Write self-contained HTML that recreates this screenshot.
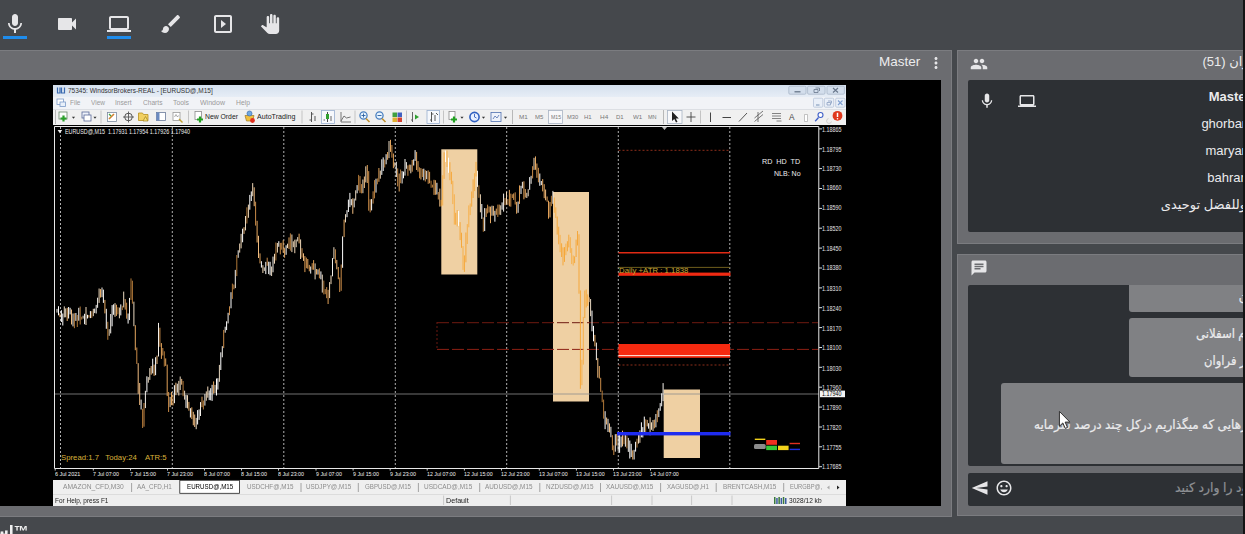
<!DOCTYPE html>
<html lang="fa"><head><meta charset="utf-8"><title>Online class</title>
<style>
html,body{margin:0;padding:0}
body{width:1245px;height:534px;overflow:hidden;position:relative;background:#45484c;font-family:"Liberation Sans","DejaVu Sans",sans-serif}
.abs{position:absolute}
.i{position:absolute;display:block}
.t{position:absolute;white-space:nowrap;font-family:"Liberation Sans",sans-serif}
.chart{position:absolute;left:53px;top:85px;display:block}
#topbar{left:0;top:0;width:1245px;height:50px;background:#45484c}
.ul{position:absolute;top:36px;height:3px;width:24px;background:#1f8ceb}
.panel{position:absolute;background:#6b6c70;box-sizing:border-box;border:1px solid #7b7c80}
.dark{position:absolute;background:#2d3034;border-radius:2px}
.ut{position:absolute;white-space:nowrap;color:#ebebed;font-size:13px;line-height:16px}
.fa{font-family:"Liberation Sans","DejaVu Sans",sans-serif}
.sx{-webkit-text-stroke:0.2px}
.sx{transform-origin:0 50%}
.bub{position:absolute;background:#808184;border-radius:3px}
#mt4{position:absolute;left:0;top:0;width:1245px;height:534px;filter:blur(0.35px)}
</style></head><body>
<div id="topbar" class="abs"></div>
<svg class="i" style="left:3px;top:12px;" width="24" height="24" viewBox="0 0 24 24"><path d="M12 14c1.66 0 2.99-1.34 2.99-3L15 5c0-1.66-1.34-3-3-3S9 3.340 9 5v6c0 1.660 1.340 3 3 3zm5.300-3c0 3-2.540 5.100-5.300 5.100S6.700 14 6.700 11H5c0 3.410 2.720 6.230 6 6.720V21h2v-3.280c3.280-.48 6-3.300 6-6.720h-1.700z" fill="#e6e6e8"/></svg><svg class="i" style="left:55px;top:12px;" width="24" height="24" viewBox="0 0 24 24"><path d="M17 10.500V7c0-.55-.45-1-1-1H4c-.55 0-1 .45-1 1v10c0 .55.45 1 1 1h12c.55 0 1-.45 1-1v-3.500l4 4v-11l-4 4z" fill="#e6e6e8"/></svg><svg class="i" style="left:107px;top:12px;" width="24" height="24" viewBox="0 0 24 24"><path d="M20 18c1.100 0 2-.9 2-2V6c0-1.100-.9-2-2-2H4c-1.100 0-2 .9-2 2v10c0 1.100.9 2 2 2H0v2h24v-2h-4zM4 6h16v10H4V6z" fill="#e6e6e8"/></svg><svg class="i" style="left:159px;top:12px;" width="24" height="24" viewBox="0 0 24 24"><path d="M7 14c-1.660 0-3 1.340-3 3 0 1.310-1.160 2-2 2 .92 1.220 2.490 2 4 2 2.210 0 4-1.790 4-4 0-1.660-1.340-3-3-3zm13.710-9.370l-1.340-1.340c-.39-.39-1.020-.39-1.410 0L9 12.250 11.750 15l8.960-8.960c.39-.39.39-1.020 0-1.410z" fill="#e6e6e8"/></svg><svg class="i" style="left:211px;top:12px;" width="24" height="24" viewBox="0 0 24 24"><path d="M10 8v8l5-4-5-4zm9-5H5c-1.100 0-2 .9-2 2v14c0 1.100.9 2 2 2h14c1.100 0 2-.9 2-2V5c0-1.100-.9-2-2-2zm0 16H5V5h14v14z" fill="#e6e6e8"/></svg><svg class="i" style="left:260px;top:14px;" width="20" height="20" viewBox="0 0 24 24"><path d="M23 5.500V20c0 2.200-1.800 4-4 4h-7.300c-1.080 0-2.100-.43-2.850-1.190L1 14.830s1.260-1.230 1.300-1.250c.22-.19.49-.29.79-.29.22 0 .42.060.6.160.040.010 4.310 2.460 4.310 2.460V4c0-.83.67-1.500 1.500-1.500S11 3.170 11 4v7h1V1.500c0-.83.67-1.500 1.500-1.500S15 .67 15 1.500V11h1V2.500c0-.83.67-1.500 1.500-1.500s1.500.67 1.500 1.500V11h1V5.500c0-.83.67-1.500 1.500-1.500s1.500.67 1.500 1.500z" fill="#e6e6e8"/></svg>
<div class="ul" style="left:3px"></div><div class="ul" style="left:107px"></div>

<!-- left share panel -->
<div class="panel" style="left:-1px;top:50px;width:953px;height:467px"></div>
<span class="ut" style="left:879px;top:53.500px;font-size:13.500px">Master</span>
<svg class="i" style="left:927px;top:54px;" width="18" height="18" viewBox="0 0 24 24"><path d="M12 8c1.100 0 2-.9 2-2s-.9-2-2-2-2 .9-2 2 .9 2 2 2zm0 2c-1.100 0-2 .9-2 2s.9 2 2 2 2-.9 2-2-.9-2-2-2zm0 6c-1.100 0-2 .9-2 2s.9 2 2 2 2-.9 2-2-.9-2-2-2z" fill="#e6e6e8"/></svg>
<div class="abs" style="left:0;top:80px;width:941px;height:426px;background:#000"></div>

<div id="mt4">
<div class="abs" style="left:53px;top:85px;width:792.500px;height:12px;background:linear-gradient(#d4e0ee,#e6edf6)"></div>
<div class="abs" style="left:53px;top:97px;width:792.500px;height:11.500px;background:#f1f3f7"></div>
<div class="abs" style="left:53px;top:108.500px;width:792.500px;height:16.500px;background:#f0f0f0;border-top:1px solid #dcdfe4;box-sizing:border-box"></div>
<div class="abs" style="left:53px;top:479.800px;width:792.500px;height:14.200px;background:#efefef"></div>
<div class="abs" style="left:53px;top:494px;width:792.500px;height:12.300px;background:#eeeeee;border-top:1px solid #dcdcdc;box-sizing:border-box"></div>
<svg class="chart" width="793" height="421" viewBox="53 85 793 421">
<rect x="53" y="125" width="793" height="355" fill="#000"/>
<line x1="60.5" y1="127" x2="60.5" y2="468" stroke="#c4c4c4" stroke-width="0.9" stroke-dasharray="2 2"/>
<line x1="172.3" y1="127" x2="172.3" y2="468" stroke="#c4c4c4" stroke-width="0.9" stroke-dasharray="2 2"/>
<line x1="283.8" y1="127" x2="283.8" y2="468" stroke="#c4c4c4" stroke-width="0.9" stroke-dasharray="2 2"/>
<line x1="395.3" y1="127" x2="395.3" y2="468" stroke="#c4c4c4" stroke-width="0.9" stroke-dasharray="2 2"/>
<line x1="506.7" y1="127" x2="506.7" y2="468" stroke="#c4c4c4" stroke-width="0.9" stroke-dasharray="2 2"/>
<line x1="618.3" y1="127" x2="618.3" y2="468" stroke="#c4c4c4" stroke-width="0.9" stroke-dasharray="2 2"/>
<line x1="729.8" y1="127" x2="729.8" y2="468" stroke="#c4c4c4" stroke-width="0.9" stroke-dasharray="2 2"/>
<rect x="441.3" y="149.3" width="36" height="125.2" fill="#efd0a3"/>
<rect x="553" y="192" width="36" height="209.5" fill="#efd0a3"/>
<rect x="663.7" y="389.5" width="36.3" height="68.5" fill="#efd0a3"/>
<line x1="437" y1="322.7" x2="818" y2="322.7" stroke="#6e1a10" stroke-width="1" stroke-dasharray="12 3"/>
<line x1="437" y1="349.4" x2="818" y2="349.4" stroke="#8c2014" stroke-width="1" stroke-dasharray="12 3"/>
<line x1="437" y1="322" x2="437" y2="350" stroke="#6a1810" stroke-width="1" stroke-dasharray="2 2"/>
<line x1="54" y1="394" x2="819" y2="394" stroke="#8e8e8e" stroke-width="0.8"/>
<line x1="618.5" y1="150.3" x2="730" y2="150.3" stroke="#b03a22" stroke-width="0.8" stroke-dasharray="2 2"/>
<line x1="618.5" y1="252.7" x2="730" y2="252.7" stroke="#e02a14" stroke-width="1.4"/>
<rect x="618.5" y="272.6" width="112" height="3.2" fill="#f02a12"/>
<line x1="618.5" y1="267.4" x2="730" y2="267.4" stroke="#7a6820" stroke-width="0.9"/>
<rect x="618.5" y="344" width="111.5" height="13.8" fill="#f52a10"/>
<line x1="618.5" y1="355.6" x2="730" y2="355.6" stroke="#ffe8e0" stroke-width="1"/>
<line x1="618.5" y1="365" x2="730" y2="365" stroke="#b03a22" stroke-width="0.8" stroke-dasharray="2 2"/>
<path d="M57.0 308.9V312.6M73.0 313.5V326.4M96.2 304.9V313.5M97.6 297.7V307.8M102.0 287.5V297.2M110.7 314.0V333.4M129.5 297.9V320.1M145.4 390.8V408.1M158.5 322.9V356.5M177.3 383.7V392.7M199.1 409.4V419.9M200.5 402.1V416.0M204.9 394.1V405.6M222.3 346.2V357.3M225.2 326.7V332.7M228.1 312.8V323.4M235.3 269.9V288.1M238.2 250.3V257.8M273.0 256.6V272.3M310.7 266.5V273.6M332.5 258.1V276.3M354.2 198.6V207.4M396.3 161.8V177.0M402.1 171.1V183.5M405.0 159.0V175.6M406.4 162.1V168.8M426.7 170.9V179.2M477.5 170.8V186.9M503.6 193.6V211.6M522.4 181.8V188.3M531.1 175.8V183.8M552.9 190.9V203.8M596.4 342.6V360.1M608.0 418.8V432.0M610.9 426.8V437.2M615.3 434.2V451.7M618.2 435.5V450.9M625.4 433.2V446.7M628.3 437.9V451.9M655.9 414.0V427.3M658.8 408.3V417.1M663.1 383.1V401.1" stroke="#f4f0ea" stroke-width="1" fill="none"/>
<path d="M58.5 306.2V315.3M61.4 310.2V322.0M62.8 313.5V325.5M68.6 307.0V318.5M70.1 307.8V314.4M75.9 313.0V320.9M78.8 307.8V320.7M84.6 313.8V324.2M87.5 314.8V318.5M90.4 311.1V318.1M94.7 308.6V313.1M103.4 289.6V302.9M106.3 308.8V328.8M112.1 305.1V326.3M113.6 304.3V314.8M120.8 304.4V315.4M128.1 313.5V323.6M141.1 399.6V409.5M146.9 376.3V392.3M152.7 358.7V373.4M155.6 357.2V375.2M174.4 385.2V403.2M186.0 394.9V407.9M190.4 408.2V417.5M197.6 410.1V424.5M209.2 390.5V400.1M210.7 388.2V400.3M212.1 384.8V400.9M216.5 378.5V395.5M217.9 378.2V389.6M220.8 352.3V370.0M226.6 321.3V330.1M231.0 292.2V308.3M242.6 228.7V242.3M249.8 194.9V209.7M251.3 191.4V201.0M261.4 261.2V267.6M265.8 261.9V274.1M268.7 261.7V274.1M270.1 261.8V275.3M278.8 241.2V246.8M286.1 245.3V254.8M318.0 269.4V274.6M320.9 271.4V279.3M342.6 236.4V267.8M347.0 210.2V217.2M348.4 199.6V212.0M349.9 192.9V207.1M351.3 199.1V205.3M357.1 185.1V193.3M371.6 199.1V210.4M376.0 178.7V192.6M381.8 159.3V174.9M383.2 157.4V171.0M386.1 154.2V164.3M403.5 171.6V178.3M413.7 159.3V165.5M415.1 150.1V160.9M423.8 168.7V180.3M436.9 182.8V194.5M445.6 150.5V162.0M448.5 157.7V172.8M458.6 211.0V225.9M481.8 204.0V218.9M484.7 208.1V231.1M494.9 210.8V221.7M502.1 202.4V209.7M518.1 201.5V212.8M521.0 185.8V194.0M529.7 177.1V189.8M539.8 173.5V185.8M541.3 181.0V185.1M592.0 310.6V331.3M593.5 325.9V341.3M605.1 411.2V429.2M619.6 434.8V452.8M621.1 436.5V447.4M629.8 440.5V458.5M631.2 443.8V457.0M634.1 449.8V459.5M635.6 441.8V451.6M641.4 422.3V437.3M642.8 427.1V437.5M644.3 416.6V432.9M648.6 423.2V428.7M660.2 403.1V410.8M661.7 393.3V406.3" stroke="#ffffff" stroke-width="1" fill="none"/>
<path d="M59.9 313.3V317.1M88.9 315.1V317.6M116.5 304.7V315.9M125.2 299.1V309.6M165.7 358.4V365.9M167.2 364.6V396.1M173.0 395.1V405.5M191.8 407.3V419.1M202.0 396.7V407.2M260.0 253.4V263.4M284.6 248.1V257.7M289.0 237.4V249.0M304.9 256.1V272.1M309.3 264.9V271.3M313.6 260.1V269.8M328.1 289.8V304.0M338.3 267.0V279.2M367.3 165.0V183.0M378.9 168.0V181.8M393.4 153.5V168.2M399.2 173.5V191.5M412.2 160.0V171.7M429.6 171.8V183.3M434.0 179.8V194.9M486.2 208.3V217.0M496.3 208.6V214.8M509.4 189.9V206.3M513.7 193.4V199.9M519.5 185.4V203.9M536.9 163.5V177.8M547.1 196.5V201.7M548.5 200.7V218.7M616.7 434.0V445.5M632.7 450.4V459.5M654.4 419.6V428.3" stroke="#e0a058" stroke-width="1" fill="none"/>
<path d="M64.3 306.4V317.4M65.7 308.4V317.3M83.1 315.7V318.6M109.2 329.2V335.8M119.4 307.6V318.3M123.7 291.6V307.4M133.9 301.7V326.2M148.3 377.1V382.7M149.8 368.1V379.9M180.2 376.5V390.0M184.6 390.7V399.6M196.2 417.9V429.2M219.4 364.9V381.8M245.5 216.0V230.4M264.3 267.4V270.9M271.6 266.5V276.0M296.2 239.5V247.2M297.7 237.1V241.4M315.1 263.4V279.4M322.3 274.6V292.6M333.9 247.2V258.9M345.5 214.2V222.4M355.7 190.3V200.5M389.0 141.0V158.1M492.0 205.7V215.7M500.7 205.3V214.9M526.8 192.8V198.0M528.2 189.2V196.3M590.6 299.0V316.2" stroke="#e8d8c0" stroke-width="1" fill="none"/>
<path d="M67.2 307.8V321.0M100.5 289.1V297.6M104.9 299.9V313.4M135.3 325.2V350.2M154.1 364.6V375.9M161.4 343.1V358.9M171.5 392.0V405.2M188.9 401.9V410.7M213.6 381.4V393.6M257.1 220.8V242.5M283.2 240.2V252.8M299.1 233.7V243.4M307.8 259.0V268.7M316.5 269.0V274.5M344.1 219.6V237.1M387.6 152.0V159.8M390.5 139.8V151.9M409.3 164.6V170.6M416.6 151.9V170.0M418.0 161.1V171.7M420.9 168.1V179.5M435.4 180.2V194.8M489.1 206.4V212.5M490.5 206.6V223.2M499.2 204.6V214.7M516.6 201.9V213.7M523.9 181.3V199.3M525.3 189.1V197.5M535.5 156.4V169.8M542.7 179.1V191.4M544.2 184.2V198.2M550.0 202.0V217.4M594.9 334.9V346.4M599.3 366.0V378.5" stroke="#e6a860" stroke-width="1" fill="none"/>
<path d="M71.5 309.5V324.5M138.2 363.2V393.8M139.7 383.0V405.0M151.2 366.0V374.7M157.0 355.6V364.0M175.9 382.7V395.2M181.7 378.9V384.7M193.3 411.8V425.3M194.7 414.5V427.0M244.0 227.2V233.9M254.2 187.3V206.2M258.5 235.8V258.0M303.5 253.3V260.9M336.8 259.9V269.3M352.8 198.3V213.8M364.4 176.5V188.0M439.8 188.6V206.6M493.4 205.9V215.7M545.6 189.5V200.3M589.1 297.3V302.1M597.8 358.1V377.7M606.6 417.5V424.5M609.5 423.4V432.5M622.5 430.7V446.4M647.2 419.9V426.4" stroke="#f0bc80" stroke-width="1" fill="none"/>
<path d="M74.4 313.2V328.2M77.3 315.0V327.0M80.2 306.5V324.5M81.7 316.7V319.6M91.8 311.2V317.9M107.8 321.8V339.8M117.9 307.2V314.3M122.3 305.8V310.1M131.0 278.4V299.9M132.4 280.7V303.7M142.6 408.8V428.0M164.3 351.3V366.6M183.1 381.0V396.2M203.4 400.5V409.5M232.4 283.6V298.9M236.8 255.0V276.1M246.9 207.3V223.5M275.9 242.5V260.5M281.7 242.8V249.7M290.4 233.3V250.7M323.8 280.6V294.4M358.6 174.9V190.5M361.5 184.1V193.4M374.5 180.1V198.4M377.4 178.4V184.3M384.7 159.5V167.5M400.6 169.5V183.2M419.5 167.3V178.3M422.4 168.9V177.0M431.1 180.7V187.8M432.5 184.7V187.5M478.9 185.3V197.8M483.3 217.4V231.8M497.8 204.6V217.0M551.4 195.8V206.2M602.2 390.6V402.2M603.6 399.6V418.7M624.0 431.9V444.2M626.9 435.5V448.4M637.0 438.7V447.6M645.7 419.3V432.1" stroke="#b07838" stroke-width="1" fill="none"/>
<path d="M86.0 307.0V325.0M93.3 308.8V316.2M99.1 288.5V302.9M115.0 303.1V316.8M170.1 396.9V407.1M178.8 380.9V395.5M187.5 395.2V408.4M206.3 391.4V400.7M207.8 386.5V397.7M215.0 384.9V393.0M239.7 243.5V252.6M241.1 233.8V248.4M248.4 204.6V217.8M252.7 183.1V196.2M262.9 265.2V273.0M274.5 253.8V263.7M277.4 243.0V252.6M287.5 243.7V248.1M291.9 234.5V252.1M293.3 241.3V247.2M294.8 239.7V253.2M300.6 239.4V259.0M329.6 282.1V298.1M331.0 275.4V284.1M362.9 179.5V193.2M365.8 166.3V182.4M380.3 170.6V178.7M394.8 162.4V166.7M410.8 164.7V173.3M480.4 194.3V212.3M506.5 191.9V204.6M534.0 157.8V169.9M638.5 433.6V443.6M639.9 430.3V442.8M650.1 417.3V435.3M651.5 422.3V429.8M653.0 420.0V431.0" stroke="#f0d8b8" stroke-width="1" fill="none"/>
<path d="M126.6 302.7V318.7M136.8 347.5V363.9M144.0 403.0V426.7M159.9 327.7V346.8M162.8 348.0V355.5M168.6 392.0V412.0M223.7 329.9V348.1M229.5 306.3V315.2M233.9 284.5V289.3M255.6 201.7V225.6M267.2 257.7V265.8M280.3 242.9V254.4M302.0 248.2V257.6M306.4 257.6V268.2M312.2 263.2V269.7M319.4 268.3V278.3M325.2 289.1V294.2M326.7 287.1V298.2M335.4 249.3V263.3M339.7 277.5V292.0M341.2 264.5V290.8M360.0 176.1V192.9M368.7 171.1V210.7M370.2 199.3V212.4M373.1 191.3V203.6M391.9 145.0V157.7M397.7 168.4V186.4M407.9 165.4V175.8M425.3 170.2V181.5M428.2 170.3V183.9M438.3 192.0V199.5M487.6 204.7V213.4M505.0 198.1V205.2M507.9 199.1V204.8M510.8 193.6V206.7M512.3 194.3V198.0M515.2 192.3V204.5M532.6 166.2V178.4M538.4 167.8V182.3M600.7 377.8V391.9M612.4 435.2V450.2M613.8 445.4V455.0M657.3 410.3V422.2" stroke="#c88a48" stroke-width="1" fill="none"/>
<path d="M441.2 199.9V206.4M444.1 152.3V178.9M449.9 162.2V180.2M451.4 171.8V184.2M455.7 212.8V224.7M460.1 222.1V240.1M461.5 232.7V247.8M464.4 255.4V271.9M465.9 232.5V262.3M471.7 191.5V206.7M473.1 179.3V198.0M476.0 161.9V176.5M557.2 216.5V234.6M558.7 226.7V244.3M561.6 243.3V257.0M563.0 247.4V265.4M564.5 247.1V261.9M567.4 241.2V251.3M568.8 234.7V247.4M574.6 256.4V263.1M576.1 239.6V257.0M577.5 231.0V245.5M579.0 234.3V293.7M580.4 290.4V388.8M584.8 290.5V318.0M586.2 289.5V307.5M587.7 294.4V305.9" stroke="#f5a73a" stroke-width="1" fill="none"/>
<path d="M442.7 175.2V205.5M447.0 150.5V167.0M452.8 180.8V204.1M454.3 194.3V224.6M457.2 210.0V226.4M463.0 246.1V269.9M467.3 224.1V244.0M468.8 205.4V227.3M470.2 203.5V215.1M474.6 173.2V191.1M554.3 197.5V212.8M555.8 207.3V218.1M560.1 234.9V252.2M565.9 243.6V255.2M570.3 237.2V252.9M571.7 248.2V264.1M573.2 255.5V265.5M581.9 359.8V385.2M583.3 316.9V364.6" stroke="#f7b04a" stroke-width="1" fill="none"/>
<rect x="617" y="432" width="113.5" height="3.4" fill="#1f2cf0"/>
<rect x="754.8" y="438.6" width="10.5" height="1.4" fill="#f2d21c"/>
<rect x="754" y="444" width="11.7" height="5" rx="1.5" fill="#8c8c8c"/>
<rect x="766.2" y="440" width="10.8" height="4.8" fill="#f03020"/>
<rect x="766.2" y="445.7" width="10.8" height="4.4" fill="#38c838"/>
<rect x="778" y="445.7" width="10.6" height="4.4" fill="#f2d21c"/>
<rect x="789.6" y="442.8" width="10.4" height="1.4" fill="#e03020"/>
<rect x="789.6" y="448.7" width="10.4" height="1.4" fill="#2030e0"/>
<path d="M54.5 468.5V126.5H818.8V468.5Z" fill="none" stroke="#e8e8e8" stroke-width="1"/>
<line x1="819" y1="128.9" x2="822" y2="128.9" stroke="#ddd" stroke-width="1"/>
<line x1="819" y1="148.8" x2="822" y2="148.8" stroke="#ddd" stroke-width="1"/>
<line x1="819" y1="168.6" x2="822" y2="168.6" stroke="#ddd" stroke-width="1"/>
<line x1="819" y1="188.5" x2="822" y2="188.5" stroke="#ddd" stroke-width="1"/>
<line x1="819" y1="208.4" x2="822" y2="208.4" stroke="#ddd" stroke-width="1"/>
<line x1="819" y1="228.2" x2="822" y2="228.2" stroke="#ddd" stroke-width="1"/>
<line x1="819" y1="248.1" x2="822" y2="248.1" stroke="#ddd" stroke-width="1"/>
<line x1="819" y1="268.0" x2="822" y2="268.0" stroke="#ddd" stroke-width="1"/>
<line x1="819" y1="287.9" x2="822" y2="287.9" stroke="#ddd" stroke-width="1"/>
<line x1="819" y1="307.7" x2="822" y2="307.7" stroke="#ddd" stroke-width="1"/>
<line x1="819" y1="327.6" x2="822" y2="327.6" stroke="#ddd" stroke-width="1"/>
<line x1="819" y1="347.5" x2="822" y2="347.5" stroke="#ddd" stroke-width="1"/>
<line x1="819" y1="367.3" x2="822" y2="367.3" stroke="#ddd" stroke-width="1"/>
<line x1="819" y1="387.2" x2="822" y2="387.2" stroke="#ddd" stroke-width="1"/>
<line x1="819" y1="407.1" x2="822" y2="407.1" stroke="#ddd" stroke-width="1"/>
<line x1="819" y1="427.0" x2="822" y2="427.0" stroke="#ddd" stroke-width="1"/>
<line x1="819" y1="446.8" x2="822" y2="446.8" stroke="#ddd" stroke-width="1"/>
<line x1="819" y1="466.7" x2="822" y2="466.7" stroke="#ddd" stroke-width="1"/>
<line x1="55.2" y1="468.5" x2="55.2" y2="470.6" stroke="#ddd" stroke-width="0.9"/>
<line x1="93.3" y1="468.5" x2="93.3" y2="470.6" stroke="#ddd" stroke-width="0.9"/>
<line x1="130.5" y1="468.5" x2="130.5" y2="470.6" stroke="#ddd" stroke-width="0.9"/>
<line x1="167.5" y1="468.5" x2="167.5" y2="470.6" stroke="#ddd" stroke-width="0.9"/>
<line x1="204.5" y1="468.5" x2="204.5" y2="470.6" stroke="#ddd" stroke-width="0.9"/>
<line x1="241.5" y1="468.5" x2="241.5" y2="470.6" stroke="#ddd" stroke-width="0.9"/>
<line x1="278.5" y1="468.5" x2="278.5" y2="470.6" stroke="#ddd" stroke-width="0.9"/>
<line x1="316" y1="468.5" x2="316" y2="470.6" stroke="#ddd" stroke-width="0.9"/>
<line x1="353.1" y1="468.5" x2="353.1" y2="470.6" stroke="#ddd" stroke-width="0.9"/>
<line x1="390.2" y1="468.5" x2="390.2" y2="470.6" stroke="#ddd" stroke-width="0.9"/>
<line x1="427.2" y1="468.5" x2="427.2" y2="470.6" stroke="#ddd" stroke-width="0.9"/>
<line x1="464.4" y1="468.5" x2="464.4" y2="470.6" stroke="#ddd" stroke-width="0.9"/>
<line x1="501.5" y1="468.5" x2="501.5" y2="470.6" stroke="#ddd" stroke-width="0.9"/>
<line x1="539.3" y1="468.5" x2="539.3" y2="470.6" stroke="#ddd" stroke-width="0.9"/>
<line x1="576.4" y1="468.5" x2="576.4" y2="470.6" stroke="#ddd" stroke-width="0.9"/>
<line x1="613.5" y1="468.5" x2="613.5" y2="470.6" stroke="#ddd" stroke-width="0.9"/>
<line x1="650.5" y1="468.5" x2="650.5" y2="470.6" stroke="#ddd" stroke-width="0.9"/>
<rect x="820" y="390.6" width="25" height="6.6" fill="#f2f2f2"/>
<path d="M662 127h5l-2.5 3z" fill="#bbb"/>
<path d="M57.6 130h4.6l-2.3 3.2z" fill="#eee"/>
</svg>
<svg class="chart" width="793" height="421" viewBox="53 85 793 421"><path d="M55.5 110V124" fill="none" stroke="#b8b8b8" stroke-width="1"/><rect x="59" y="112" width="8" height="7" fill="#fdfdfd" stroke="#6a8a6a" stroke-width="0.8" rx="0"/><path d="M63.500 115.500v6M60.500 118.500h6" fill="none" stroke="#2aa02a" stroke-width="2.2"/><path d="M71.9 116.7h3.200l-1.600 2z" fill="#333"/><rect x="82" y="112" width="7" height="6" fill="#eef2fa" stroke="#5a6a9a" stroke-width="0.8" rx="0"/><rect x="84" y="115" width="7" height="6" fill="#fff" stroke="#5a6a9a" stroke-width="0.8" rx="0"/><path d="M93.4 116.7h3.200l-1.600 2z" fill="#333"/><path d="M101 110.5V123.5" fill="none" stroke="#c4c4c4" stroke-width="1"/><rect x="107.5" y="112.5" width="9" height="9" fill="#fff" stroke="#7a8aa0" stroke-width="0.8" rx="0"/><path d="M109 119l5-5" fill="none" stroke="#d08030" stroke-width="1.6"/><path d="M109 114l2 2" fill="none" stroke="#40a040" stroke-width="1.2"/><circle cx="128.5" cy="117" r="3.8" fill="none" stroke="#555" stroke-width="1"/><path d="M128.500 111.500v11M123 117h11" fill="none" stroke="#555" stroke-width="0.9"/><path d="M138.500 113h4l1 1.500h4.500v6h-9.500z" fill="#f2d060" stroke="#b89020" stroke-width="0.8"/><path d="M143 121l2.500-4.500 2.500 4.500z" fill="#f8e070" stroke="#a08020" stroke-width="0.7"/><rect x="156.5" y="112.5" width="9" height="8" fill="#fff" stroke="#6a7a9a" stroke-width="0.8" rx="0"/><rect x="156.5" y="112.5" width="3" height="8" fill="#6a8ac0" rx="0"/><rect x="173" y="112.5" width="7" height="8" fill="#fff" stroke="#9a9a9a" stroke-width="0.8" rx="0"/><path d="M174.500 117l1.500-2.500 1.500 2.500 1-1.500" fill="none" stroke="#888" stroke-width="0.7"/><path d="M179 119l3.500 3.500" fill="none" stroke="#c0a030" stroke-width="1.4"/><path d="M188.5 110.5V123.5" fill="none" stroke="#c4c4c4" stroke-width="1"/><rect x="195" y="111.5" width="6.5" height="8" fill="#fff" stroke="#8a8a8a" stroke-width="0.8" rx="0"/><path d="M200 116.500v6M197 119.500h6" fill="none" stroke="#20a020" stroke-width="2.2"/><path d="M245 115.500h9l-1.500 5.500h-6z" fill="#f0c040" stroke="#a07820" stroke-width="0.7"/><circle cx="249.5" cy="113.5" r="2.5" fill="#70a8e0" stroke="#4070b0" stroke-width="0.7"/><circle cx="252.5" cy="120.5" r="2.4" fill="#e03020"/><path d="M302 110.5V123.5" fill="none" stroke="#c4c4c4" stroke-width="1"/><path d="M311.500 112v10M309.500 120h2M311.500 114h2M315 116v5" fill="none" stroke="#555" stroke-width="1"/><rect x="321.5" y="110.5" width="13" height="13" fill="#f6f8fc" stroke="#9ab0d0" stroke-width="0.8" rx="0"/><path d="M327.500 112v10" fill="none" stroke="#333" stroke-width="0.9"/><rect x="326" y="114" width="3" height="5" fill="#30a030" rx="0"/><path d="M323.500 120h1.500M331 116v5" fill="none" stroke="#555" stroke-width="0.9"/><path d="M341 121l3-5 2.500 2 4-1M341 112v10h10" fill="none" stroke="#666" stroke-width="0.9"/><path d="M355 110.5V123.5" fill="none" stroke="#c4c4c4" stroke-width="1"/><circle cx="363.5" cy="115.5" r="3.6" fill="#e8f4ff" stroke="#4a80c0" stroke-width="1.3"/><path d="M366 118.500l3.500 3.500" fill="none" stroke="#c09030" stroke-width="1.6"/><path d="M361.500 115.500h4M363.500 113.500v4" fill="none" stroke="#2a60a0" stroke-width="0.9"/><circle cx="379.5" cy="115.5" r="3.6" fill="#e8f4ff" stroke="#4a80c0" stroke-width="1.3"/><path d="M382 118.500l3.500 3.500" fill="none" stroke="#c09030" stroke-width="1.6"/><path d="M377.500 115.500h4" fill="none" stroke="#2a60a0" stroke-width="0.9"/><rect x="392.5" y="112.5" width="4.5" height="4.5" fill="#40a040" rx="0"/><rect x="397.5" y="112.5" width="4.5" height="4.5" fill="#4060c0" rx="0"/><rect x="392.5" y="117.5" width="4.5" height="4.5" fill="#e0b030" rx="0"/><rect x="397.5" y="117.5" width="4.5" height="4.5" fill="#d04030" rx="0"/><path d="M406.5 110.5V123.5" fill="none" stroke="#c4c4c4" stroke-width="1"/><path d="M412.500 112v10M411 120h2" fill="none" stroke="#555" stroke-width="0.9"/><path d="M415 114.500l4 2.500-4 2.500z" fill="#30a030"/><rect x="427" y="110.5" width="12.5" height="13" fill="#f6f8fc" stroke="#9ab0d0" stroke-width="0.8" rx="0"/><path d="M431.500 112v10M430 120h1.500M431.500 114h2M435 115v6M436 113l2 2" fill="none" stroke="#444" stroke-width="0.9"/><path d="M443.5 110.5V123.5" fill="none" stroke="#c4c4c4" stroke-width="1"/><rect x="449" y="111.5" width="6" height="8" fill="#fff" stroke="#8a8a8a" stroke-width="0.8" rx="0"/><path d="M454 116.500v6M451 119.500h6" fill="none" stroke="#20a020" stroke-width="2.2"/><path d="M460.4 116.7h3.200l-1.600 2z" fill="#333"/><circle cx="474.5" cy="117" r="4.6" fill="#e8f0ff" stroke="#3060c0" stroke-width="1.6"/><path d="M474.500 114v3l2 1" fill="none" stroke="#3060c0" stroke-width="0.9"/><path d="M481.9 116.7h3.200l-1.600 2z" fill="#333"/><rect x="491" y="112.5" width="10" height="9" fill="#eef2fa" stroke="#5070b0" stroke-width="0.8" rx="0"/><path d="M493 119l2-3 2 2 2-3" fill="none" stroke="#5070b0" stroke-width="0.8"/><path d="M503.9 116.7h3.200l-1.600 2z" fill="#333"/><path d="M512.500 110V124" fill="none" stroke="#b8b8b8" stroke-width="1"/><rect x="548.5" y="110.5" width="14" height="13" fill="#f8f8fa" stroke="#a8b4c4" stroke-width="0.8" rx="0"/><path d="M663.500 110V124" fill="none" stroke="#b8b8b8" stroke-width="1"/><rect x="667.5" y="110.5" width="14.5" height="13" fill="#f8f8fa" stroke="#a8b4c4" stroke-width="0.8" rx="0"/><path d="M672 111.500v9.500l2.300-2 1.700 3.500 1.500-.7-1.700-3.400h3z" fill="#222"/><path d="M691 112v10M686.500 117h9" fill="none" stroke="#444" stroke-width="0.9"/><path d="M700.5 110.5V123.5" fill="none" stroke="#c4c4c4" stroke-width="1"/><path d="M710.500 112.500v9.500" fill="none" stroke="#444" stroke-width="1"/><path d="M722.500 117.500h8.500" fill="none" stroke="#444" stroke-width="1"/><path d="M739 121.500l8-8.500" fill="none" stroke="#555" stroke-width="1"/><path d="M754.500 121.500l8.500-7M754.500 118l8.500-7M758 112v10" fill="none" stroke="#555" stroke-width="0.8"/><path d="M772 113.500h9M772 116h9M772 118.500h9M776.500 121h5" fill="none" stroke="#666" stroke-width="0.8"/><path d="M804.500 114.500h3v7h-3z" fill="#fff" stroke="#aaa" stroke-width="0.7"/><circle cx="820.5" cy="115" r="2.5" fill="#fff" stroke="#4060c8" stroke-width="1.1"/><path d="M818.500 117.500l-3.300 3.800" fill="none" stroke="#4060c8" stroke-width="1.3"/><path d="M828.500 118.500a2.500 2.500 0 1 0 3 3" fill="#eee" stroke="#bbb" stroke-width="0.6"/><circle cx="837.5" cy="115.8" r="4.9" fill="#e0381c"/><path d="M837.500 112.800v4.200" fill="none" stroke="#fff" stroke-width="1.5"/><circle cx="837.5" cy="118.7" r="0.8" fill="#fff"/><path d="M57.500 87.500v5.500h2.500v-5.500M61.500 87.500v5.500h3v-5.500" fill="none" stroke="#3a6ab0" stroke-width="1.2"/><rect x="57" y="99" width="6.5" height="5.5" fill="#fff" stroke="#7a9ac8" stroke-width="0.8" rx="0"/><rect x="60" y="102" width="5.5" height="4.5" fill="#e8f0fa" stroke="#7a9ac8" stroke-width="0.8" rx="0"/><rect x="788.8" y="86.2" width="17.2" height="8" fill="#d3deec" stroke="#a9b7c9" stroke-width="0.8" rx="1.2"/><rect x="807.6" y="86.2" width="17.4" height="8" fill="#d3deec" stroke="#a9b7c9" stroke-width="0.8" rx="1.2"/><rect x="827" y="86.2" width="17.4" height="8" fill="#d3deec" stroke="#a9b7c9" stroke-width="0.8" rx="1.2"/><path d="M794.500 91.800h6" fill="none" stroke="#66758a" stroke-width="1.3"/><path d="M814 89.500h4v3h-4zM815.500 88h4v3" fill="none" stroke="#66758a" stroke-width="0.8"/><path d="M833 88l5 4.500M838 88l-5 4.500" fill="none" stroke="#66758a" stroke-width="1.1"/><rect x="813.5" y="98.2" width="9.3" height="9" fill="#e9eff8" stroke="#b5c3d8" stroke-width="0.8" rx="1"/><rect x="824.4" y="98.2" width="9.3" height="9" fill="#e9eff8" stroke="#b5c3d8" stroke-width="0.8" rx="1"/><rect x="835.7" y="98.2" width="9.3" height="9" fill="#e9eff8" stroke="#b5c3d8" stroke-width="0.8" rx="1"/><path d="M816 105h3.500" fill="none" stroke="#8aa0c0" stroke-width="1.2"/><path d="M827 102.500h3.500v2.500h-3.500zM828 101h3.500v2.500" fill="none" stroke="#8aa0c0" stroke-width="0.8"/><path d="M838 100.500l4.500 4.500M842.500 100.500l-4.500 4.500" fill="none" stroke="#7f9fd0" stroke-width="1.1"/><rect x="179.8" y="480.3" width="59.7" height="13" fill="#fff" stroke="#222" stroke-width="0.8" rx="0"/><path d="M131.6 483V492" fill="none" stroke="#9a9a9a" stroke-width="0.9"/><path d="M301 483V492" fill="none" stroke="#9a9a9a" stroke-width="0.9"/><path d="M358.3 483V492" fill="none" stroke="#9a9a9a" stroke-width="0.9"/><path d="M418.4 483V492" fill="none" stroke="#9a9a9a" stroke-width="0.9"/><path d="M479.7 483V492" fill="none" stroke="#9a9a9a" stroke-width="0.9"/><path d="M539.8 483V492" fill="none" stroke="#9a9a9a" stroke-width="0.9"/><path d="M600.5 483V492" fill="none" stroke="#9a9a9a" stroke-width="0.9"/><path d="M660.6 483V492" fill="none" stroke="#9a9a9a" stroke-width="0.9"/><path d="M716.2 483V492" fill="none" stroke="#9a9a9a" stroke-width="0.9"/><path d="M783.7 483V492" fill="none" stroke="#9a9a9a" stroke-width="0.9"/><path d="M829.500 485.500v4l-2.500-2z" fill="#aaa"/><path d="M837 485.500v4l2.500-2z" fill="#222"/><path d="M443.6 495.500V505" fill="none" stroke="#c8c8c8" stroke-width="1"/><path d="M510.4 495.500V505" fill="none" stroke="#c8c8c8" stroke-width="1"/><path d="M611.6 495.500V505" fill="none" stroke="#c8c8c8" stroke-width="1"/><path d="M652 495.500V505" fill="none" stroke="#c8c8c8" stroke-width="1"/><path d="M691.6 495.500V505" fill="none" stroke="#c8c8c8" stroke-width="1"/><path d="M732 495.500V505" fill="none" stroke="#c8c8c8" stroke-width="1"/><rect x="774.0" y="497" width="1.5" height="7" fill="#3a7a3a" rx="0"/><rect x="776.2" y="498" width="1.5" height="6" fill="#3a5aa0" rx="0"/><rect x="778.4" y="497" width="1.5" height="7" fill="#3a7a3a" rx="0"/><rect x="780.6" y="498" width="1.5" height="6" fill="#3a5aa0" rx="0"/><rect x="782.8" y="497" width="1.5" height="7" fill="#3a7a3a" rx="0"/><rect x="785.0" y="498" width="1.5" height="6" fill="#3a5aa0" rx="0"/></svg>
<span class="t" style="left:821.8px;top:125.6px;font-size:6.30px;line-height:7.24px;color:#e4e4e4;transform:scaleX(0.852);transform-origin:0 50%;">1.18865</span>
<span class="t" style="left:821.8px;top:145.5px;font-size:6.30px;line-height:7.24px;color:#e4e4e4;transform:scaleX(0.852);transform-origin:0 50%;">1.18795</span>
<span class="t" style="left:821.8px;top:164.6px;font-size:6.30px;line-height:7.24px;color:#e4e4e4;transform:scaleX(0.852);transform-origin:0 50%;">1.18730</span>
<span class="t" style="left:821.8px;top:184.3px;font-size:6.30px;line-height:7.24px;color:#e4e4e4;transform:scaleX(0.852);transform-origin:0 50%;">1.18660</span>
<span class="t" style="left:821.8px;top:204.4px;font-size:6.30px;line-height:7.24px;color:#e4e4e4;transform:scaleX(0.852);transform-origin:0 50%;">1.18590</span>
<span class="t" style="left:821.8px;top:224.6px;font-size:6.30px;line-height:7.24px;color:#e4e4e4;transform:scaleX(0.852);transform-origin:0 50%;">1.18520</span>
<span class="t" style="left:821.8px;top:244.5px;font-size:6.30px;line-height:7.24px;color:#e4e4e4;transform:scaleX(0.852);transform-origin:0 50%;">1.18450</span>
<span class="t" style="left:821.8px;top:264.4px;font-size:6.30px;line-height:7.24px;color:#e4e4e4;transform:scaleX(0.852);transform-origin:0 50%;">1.18380</span>
<span class="t" style="left:821.8px;top:284.7px;font-size:6.30px;line-height:7.24px;color:#e4e4e4;transform:scaleX(0.852);transform-origin:0 50%;">1.18310</span>
<span class="t" style="left:821.8px;top:304.6px;font-size:6.30px;line-height:7.24px;color:#e4e4e4;transform:scaleX(0.852);transform-origin:0 50%;">1.18240</span>
<span class="t" style="left:821.8px;top:324.5px;font-size:6.30px;line-height:7.24px;color:#e4e4e4;transform:scaleX(0.852);transform-origin:0 50%;">1.18170</span>
<span class="t" style="left:821.8px;top:344.4px;font-size:6.30px;line-height:7.24px;color:#e4e4e4;transform:scaleX(0.852);transform-origin:0 50%;">1.18100</span>
<span class="t" style="left:821.8px;top:364.5px;font-size:6.30px;line-height:7.24px;color:#e4e4e4;transform:scaleX(0.852);transform-origin:0 50%;">1.18030</span>
<span class="t" style="left:821.8px;top:384.4px;font-size:6.30px;line-height:7.24px;color:#e4e4e4;transform:scaleX(0.852);transform-origin:0 50%;">1.17960</span>
<span class="t" style="left:821.8px;top:404.3px;font-size:6.30px;line-height:7.24px;color:#e4e4e4;transform:scaleX(0.852);transform-origin:0 50%;">1.17890</span>
<span class="t" style="left:821.8px;top:424.2px;font-size:6.30px;line-height:7.24px;color:#e4e4e4;transform:scaleX(0.852);transform-origin:0 50%;">1.17820</span>
<span class="t" style="left:821.8px;top:443.5px;font-size:6.30px;line-height:7.24px;color:#e4e4e4;transform:scaleX(0.852);transform-origin:0 50%;">1.17755</span>
<span class="t" style="left:821.8px;top:463.4px;font-size:6.30px;line-height:7.24px;color:#e4e4e4;transform:scaleX(0.852);transform-origin:0 50%;">1.17685</span>
<span class="t" style="left:821.8px;top:390.4px;font-size:6.30px;line-height:7.24px;color:#000;transform:scaleX(0.852);transform-origin:0 50%;">1.17940</span>
<span class="t" style="left:54.7px;top:471.1px;font-size:6.00px;line-height:6.90px;color:#f0f0f0;transform:scaleX(0.914);transform-origin:0 50%;">6 Jul 2021</span>
<span class="t" style="left:92.8px;top:471.1px;font-size:6.00px;line-height:6.90px;color:#f0f0f0;transform:scaleX(0.886);transform-origin:0 50%;">7 Jul 07:00</span>
<span class="t" style="left:130.0px;top:471.1px;font-size:6.00px;line-height:6.90px;color:#f0f0f0;transform:scaleX(0.886);transform-origin:0 50%;">7 Jul 15:00</span>
<span class="t" style="left:167.0px;top:471.1px;font-size:6.00px;line-height:6.90px;color:#f0f0f0;transform:scaleX(0.886);transform-origin:0 50%;">7 Jul 23:00</span>
<span class="t" style="left:204.0px;top:471.1px;font-size:6.00px;line-height:6.90px;color:#f0f0f0;transform:scaleX(0.886);transform-origin:0 50%;">8 Jul 07:00</span>
<span class="t" style="left:241.0px;top:471.1px;font-size:6.00px;line-height:6.90px;color:#f0f0f0;transform:scaleX(0.886);transform-origin:0 50%;">8 Jul 15:00</span>
<span class="t" style="left:278.0px;top:471.1px;font-size:6.00px;line-height:6.90px;color:#f0f0f0;transform:scaleX(0.886);transform-origin:0 50%;">8 Jul 23:00</span>
<span class="t" style="left:315.5px;top:471.1px;font-size:6.00px;line-height:6.90px;color:#f0f0f0;transform:scaleX(0.882);transform-origin:0 50%;">9 Jul 07:00</span>
<span class="t" style="left:352.6px;top:471.1px;font-size:6.00px;line-height:6.90px;color:#f0f0f0;transform:scaleX(0.882);transform-origin:0 50%;">9 Jul 15:00</span>
<span class="t" style="left:389.7px;top:471.1px;font-size:6.00px;line-height:6.90px;color:#f0f0f0;transform:scaleX(0.886);transform-origin:0 50%;">9 Jul 23:00</span>
<span class="t" style="left:426.7px;top:471.1px;font-size:6.00px;line-height:6.90px;color:#f0f0f0;transform:scaleX(0.878);transform-origin:0 50%;">12 Jul 07:00</span>
<span class="t" style="left:463.9px;top:471.1px;font-size:6.00px;line-height:6.90px;color:#f0f0f0;transform:scaleX(0.875);transform-origin:0 50%;">12 Jul 15:00</span>
<span class="t" style="left:501.0px;top:471.1px;font-size:6.00px;line-height:6.90px;color:#f0f0f0;transform:scaleX(0.875);transform-origin:0 50%;">12 Jul 23:00</span>
<span class="t" style="left:538.8px;top:471.1px;font-size:6.00px;line-height:6.90px;color:#f0f0f0;transform:scaleX(0.875);transform-origin:0 50%;">13 Jul 07:00</span>
<span class="t" style="left:575.9px;top:471.1px;font-size:6.00px;line-height:6.90px;color:#f0f0f0;transform:scaleX(0.875);transform-origin:0 50%;">13 Jul 15:00</span>
<span class="t" style="left:613.0px;top:471.1px;font-size:6.00px;line-height:6.90px;color:#f0f0f0;transform:scaleX(0.878);transform-origin:0 50%;">13 Jul 23:00</span>
<span class="t" style="left:650.0px;top:471.1px;font-size:6.00px;line-height:6.90px;color:#f0f0f0;transform:scaleX(0.881);transform-origin:0 50%;">14 Jul 07:00</span>
<span class="t" style="left:64.5px;top:128.0px;font-size:6.30px;line-height:7.24px;color:#f0f0f0;transform:scaleX(0.852);transform-origin:0 50%;">EURUSD@,M15&nbsp; 1.17931 1.17954 1.17926 1.17940</span>
<span class="t" style="left:762.4px;top:158.1px;font-size:7.30px;line-height:8.39px;color:#eee;transform:scaleX(0.985);transform-origin:0 50%;">RD&nbsp; HD&nbsp; TD</span>
<span class="t" style="left:774.0px;top:170.0px;font-size:7.04px;line-height:8.09px;color:#eee;">NLB: No</span>
<span class="t" style="left:61.4px;top:452.7px;font-size:7.90px;line-height:9.08px;color:#d8b13a;transform:scaleX(0.984);transform-origin:0 50%;">Spread:1.7&nbsp;&nbsp; Today:24&nbsp;&nbsp;&nbsp; ATR:5</span>
<span class="t" style="left:618.5px;top:266.5px;font-size:6.80px;line-height:7.82px;color:#c8a634;transform:scaleX(1.148);transform-origin:0 50%;">Daily +ATR : 1.1838</span>
<span class="t" style="left:68.0px;top:86.9px;font-size:6.51px;line-height:7.49px;color:#333;">75345: WindsorBrokers-REAL - [EURUSD@,M15]</span>
<span class="t" style="left:69.5px;top:98.7px;font-size:6.70px;line-height:7.70px;color:#9a9a9a;transform:scaleX(0.973);transform-origin:0 50%;">File</span>
<span class="t" style="left:90.5px;top:98.7px;font-size:6.70px;line-height:7.70px;color:#9a9a9a;transform:scaleX(0.972);transform-origin:0 50%;">View</span>
<span class="t" style="left:115.0px;top:98.7px;font-size:6.70px;line-height:7.70px;color:#9a9a9a;transform:scaleX(0.985);transform-origin:0 50%;">Insert</span>
<span class="t" style="left:142.5px;top:98.7px;font-size:6.70px;line-height:7.70px;color:#9a9a9a;transform:scaleX(0.988);transform-origin:0 50%;">Charts</span>
<span class="t" style="left:173.0px;top:98.7px;font-size:6.70px;line-height:7.70px;color:#9a9a9a;transform:scaleX(1.023);transform-origin:0 50%;">Tools</span>
<span class="t" style="left:200.0px;top:98.7px;font-size:6.70px;line-height:7.70px;color:#9a9a9a;transform:scaleX(1.049);transform-origin:0 50%;">Window</span>
<span class="t" style="left:236.0px;top:98.7px;font-size:6.70px;line-height:7.70px;color:#9a9a9a;transform:scaleX(1.016);transform-origin:0 50%;">Help</span>
<span class="t" style="left:205.0px;top:112.6px;font-size:6.90px;line-height:7.93px;color:#222;transform:scaleX(0.989);transform-origin:0 50%;">New Order</span>
<span class="t" style="left:257.0px;top:112.6px;font-size:6.90px;line-height:7.93px;color:#222;transform:scaleX(1.031);transform-origin:0 50%;">AutoTrading</span>
<span class="t" style="left:518.5px;top:113.8px;font-size:6.00px;line-height:6.90px;color:#777;transform:scaleX(1.056);transform-origin:0 50%;">M1</span>
<span class="t" style="left:534.7px;top:113.8px;font-size:6.00px;line-height:6.90px;color:#777;transform:scaleX(0.996);transform-origin:0 50%;">M5</span>
<span class="t" style="left:550.5px;top:113.8px;font-size:6.00px;line-height:6.90px;color:#777;transform:scaleX(0.857);transform-origin:0 50%;">M15</span>
<span class="t" style="left:566.8px;top:113.8px;font-size:6.00px;line-height:6.90px;color:#777;transform:scaleX(0.960);transform-origin:0 50%;">M30</span>
<span class="t" style="left:584.3px;top:113.8px;font-size:6.00px;line-height:6.90px;color:#777;transform:scaleX(1.004);transform-origin:0 50%;">H1</span>
<span class="t" style="left:599.8px;top:113.8px;font-size:6.00px;line-height:6.90px;color:#777;transform:scaleX(1.069);transform-origin:0 50%;">H4</span>
<span class="t" style="left:616.4px;top:113.8px;font-size:6.00px;line-height:6.90px;color:#777;transform:scaleX(0.991);transform-origin:0 50%;">D1</span>
<span class="t" style="left:632.5px;top:113.8px;font-size:6.00px;line-height:6.90px;color:#777;transform:scaleX(1.022);transform-origin:0 50%;">W1</span>
<span class="t" style="left:648.4px;top:113.8px;font-size:6.00px;line-height:6.90px;color:#777;transform:scaleX(0.922);transform-origin:0 50%;">MN</span>
<span class="t" style="left:789.0px;top:112.8px;font-size:8.25px;line-height:9.48px;color:#444;">A</span>
<span class="t" style="left:63.0px;top:483.4px;font-size:7.00px;line-height:8.05px;color:#8c8c8c;transform:scaleX(0.953);transform-origin:0 50%;">AMAZON_CFD,M30</span>
<span class="t" style="left:137.3px;top:483.4px;font-size:7.00px;line-height:8.05px;color:#8c8c8c;transform:scaleX(0.901);transform-origin:0 50%;">AA_CFD,H1</span>
<span class="t" style="left:186.6px;top:483.4px;font-size:7.00px;line-height:8.05px;color:#000;transform:scaleX(0.885);transform-origin:0 50%;">EURUSD@,M15</span>
<span class="t" style="left:247.0px;top:483.4px;font-size:7.00px;line-height:8.05px;color:#8c8c8c;transform:scaleX(0.897);transform-origin:0 50%;">USDCHF@,M15</span>
<span class="t" style="left:306.3px;top:483.4px;font-size:7.00px;line-height:8.05px;color:#8c8c8c;transform:scaleX(0.899);transform-origin:0 50%;">USDJPY@,M15</span>
<span class="t" style="left:365.0px;top:483.4px;font-size:7.00px;line-height:8.05px;color:#8c8c8c;transform:scaleX(0.881);transform-origin:0 50%;">GBPUSD@,M15</span>
<span class="t" style="left:424.0px;top:483.4px;font-size:7.00px;line-height:8.05px;color:#8c8c8c;transform:scaleX(0.925);transform-origin:0 50%;">USDCAD@,M15</span>
<span class="t" style="left:484.8px;top:483.4px;font-size:7.00px;line-height:8.05px;color:#8c8c8c;transform:scaleX(0.909);transform-origin:0 50%;">AUDUSD@,M15</span>
<span class="t" style="left:545.5px;top:483.4px;font-size:7.00px;line-height:8.05px;color:#8c8c8c;transform:scaleX(0.916);transform-origin:0 50%;">NZDUSD@,M15</span>
<span class="t" style="left:606.2px;top:483.4px;font-size:7.00px;line-height:8.05px;color:#8c8c8c;transform:scaleX(0.912);transform-origin:0 50%;">XAUUSD@,M15</span>
<span class="t" style="left:667.0px;top:483.4px;font-size:7.00px;line-height:8.05px;color:#8c8c8c;transform:scaleX(0.883);transform-origin:0 50%;">XAGUSD@,H1</span>
<span class="t" style="left:722.6px;top:483.4px;font-size:7.00px;line-height:8.05px;color:#8c8c8c;transform:scaleX(0.909);transform-origin:0 50%;">BRENTCASH,M15</span>
<span class="t" style="left:790.4px;top:483.4px;font-size:7.00px;line-height:8.05px;color:#8c8c8c;transform:scaleX(0.831);transform-origin:0 50%;">EURGBP@,</span>
<span class="t" style="left:54.5px;top:497.0px;font-size:6.60px;line-height:7.59px;color:#222;transform:scaleX(0.979);transform-origin:0 50%;">For Help, press F1</span>
<span class="t" style="left:446.3px;top:497.0px;font-size:6.60px;line-height:7.59px;color:#222;transform:scaleX(1.085);transform-origin:0 50%;">Default</span>
<span class="t" style="left:789.4px;top:497.0px;font-size:6.60px;line-height:7.59px;color:#222;transform:scaleX(0.998);transform-origin:0 50%;">3028/12 kb</span>
</div>

<!-- users panel -->
<div class="panel" style="left:957px;top:50px;width:300px;height:194px"></div>
<svg class="i" style="left:970px;top:55px;" width="18" height="18" viewBox="0 0 24 24"><path d="M16 11c1.660 0 2.990-1.340 2.990-3S17.660 5 16 5c-1.660 0-3 1.340-3 3s1.340 3 3 3zm-8 0c1.660 0 2.990-1.340 2.990-3S9.660 5 8 5C6.340 5 5 6.340 5 8s1.340 3 3 3zm0 2c-2.330 0-7 1.170-7 3.500V19h14v-2.500c0-2.330-4.670-3.500-7-3.500zm8 0c-.29 0-.62.020-.97.050 1.160.84 1.970 1.970 1.970 3.450V19h6v-2.500c0-2.330-4.670-3.500-7-3.500z" fill="#e6e6e8"/></svg>
<span class="ut fa" style="left:1202.500px;top:54px" dir="rtl">کاربران (51)</span>
<div class="dark" style="left:968px;top:80px;width:290px;height:152px"></div>
<svg class="i" style="left:978px;top:92px;" width="18" height="18" viewBox="0 0 24 24"><path d="M12 14c1.66 0 2.99-1.34 2.99-3L15 5c0-1.66-1.34-3-3-3S9 3.340 9 5v6c0 1.660 1.340 3 3 3zm5.300-3c0 3-2.540 5.100-5.300 5.100S6.700 14 6.700 11H5c0 3.410 2.720 6.230 6 6.720V21h2v-3.280c3.280-.48 6-3.300 6-6.720h-1.700z" fill="#e6e6e8"/></svg><svg class="i" style="left:1018px;top:92px;" width="18" height="18" viewBox="0 0 24 24"><path d="M20 18c1.100 0 2-.9 2-2V6c0-1.100-.9-2-2-2H4c-1.100 0-2 .9-2 2v10c0 1.100.9 2 2 2H0v2h24v-2h-4zM4 6h16v10H4V6z" fill="#e6e6e8"/></svg>
<span class="ut" style="left:1208.700px;top:89px;font-weight:bold">Master</span>
<span class="ut" style="left:1201.400px;top:116px">ghorbani</span>
<span class="ut" style="left:1205.500px;top:143px">maryam</span>
<span class="ut" style="left:1207.300px;top:170px">bahram</span>
<span class="ut fa" style="left:1160.800px;top:196.500px" dir="rtl">ابوللفضل توحیدی</span>

<!-- chat panel -->
<div class="panel" style="left:957px;top:254px;width:300px;height:262px"></div>
<svg class="i" style="left:970px;top:259px;" width="18" height="18" viewBox="0 0 24 24"><path d="M20 2H4c-1.100 0-1.990.9-1.990 2L2 22l4-4h14c1.100 0 2-.9 2-2V4c0-1.100-.9-2-2-2zM6 9h12v2H6V9zm8 5H6v-2h8v2zm4-6H6V6h12v2z" fill="#e6e6e8"/></svg>
<div class="dark" style="left:968px;top:284.500px;width:290px;height:181px;overflow:hidden">
<div class="bub" style="left:161px;top:-6px;width:130px;height:33.200px"></div>
<div class="bub" style="left:161px;top:33.600px;width:130px;height:58.600px"></div>
<div class="bub" style="left:33px;top:98.200px;width:260px;height:81.400px"></div></div>
<span class="ut fa" style="left:1238.500px;top:289px" dir="rtl">بله استاد ممنون</span>
<span class="ut fa sx" style="left:1196px;top:326px;transform:scaleX(0.9)" dir="rtl">سلام اسفلانی</span>
<span class="ut fa sx" style="left:1204.400px;top:353px;transform:scaleX(0.89)" dir="rtl">تشکر فراوان</span>
<span class="ut fa sx" style="left:1033.500px;top:416.500px;transform:scaleX(0.926)" dir="rtl">استاد حد ضررهایی که میگذاریم درکل چند درصد سرمایه</span>
<div class="dark" style="left:968px;top:472.500px;width:290px;height:33.500px"></div>
<svg class="i" style="left:971px;top:479px;transform:scaleX(-1)" width="18" height="18" viewBox="0 0 24 24"><path d="M2.010 21L23 12 2.010 3 2 10l15 2-15 2z" fill="#e6e6e8"/></svg><svg class="i" style="left:995px;top:479px;" width="18" height="18" viewBox="0 0 24 24"><path d="M11.990 2C6.470 2 2 6.480 2 12s4.470 10 9.990 10C17.520 22 22 17.520 22 12S17.520 2 11.990 2zM12 20c-4.420 0-8-3.580-8-8s3.580-8 8-8 8 3.580 8 8-3.580 8-8 8zm3.500-9c.83 0 1.500-.67 1.500-1.500S16.330 8 15.500 8 14 8.670 14 9.500s.67 1.500 1.500 1.500zm-7 0c.83 0 1.500-.67 1.500-1.500S9.330 8 8.500 8 7 8.670 7 9.500 7.670 11 8.500 11zm3.500 6.500c2.330 0 4.310-1.460 5.110-3.500H6.890c.8 2.040 2.780 3.500 5.110 3.500z" fill="#e6e6e8"/></svg>
<span class="ut fa sx" style="left:1174.500px;top:480px;color:#8e9094;transform:scaleX(0.96)" dir="rtl">پیام خود را وارد کنید</span>

<!-- mouse cursor -->
<svg class="i" style="left:1058px;top:410px" width="13.300" height="20" viewBox="0 0 14 21"><path d="M1.500 1.500v15.500l3.600-3.400 2.500 5.700 2.400-1-2.500-5.600h5z" fill="#fff" stroke="#2a2a2a" stroke-width="1"/></svg>

<span class="ut fa" id="wm" style="right:1216.800px;top:523px;font-size:14.500px;font-weight:bold;color:#f0f0f0" dir="rtl">™اسکای‌روم</span>
<div class="abs" style="left:1243.200px;top:0;width:2px;height:534px;background:#141414"></div>
</body></html>
